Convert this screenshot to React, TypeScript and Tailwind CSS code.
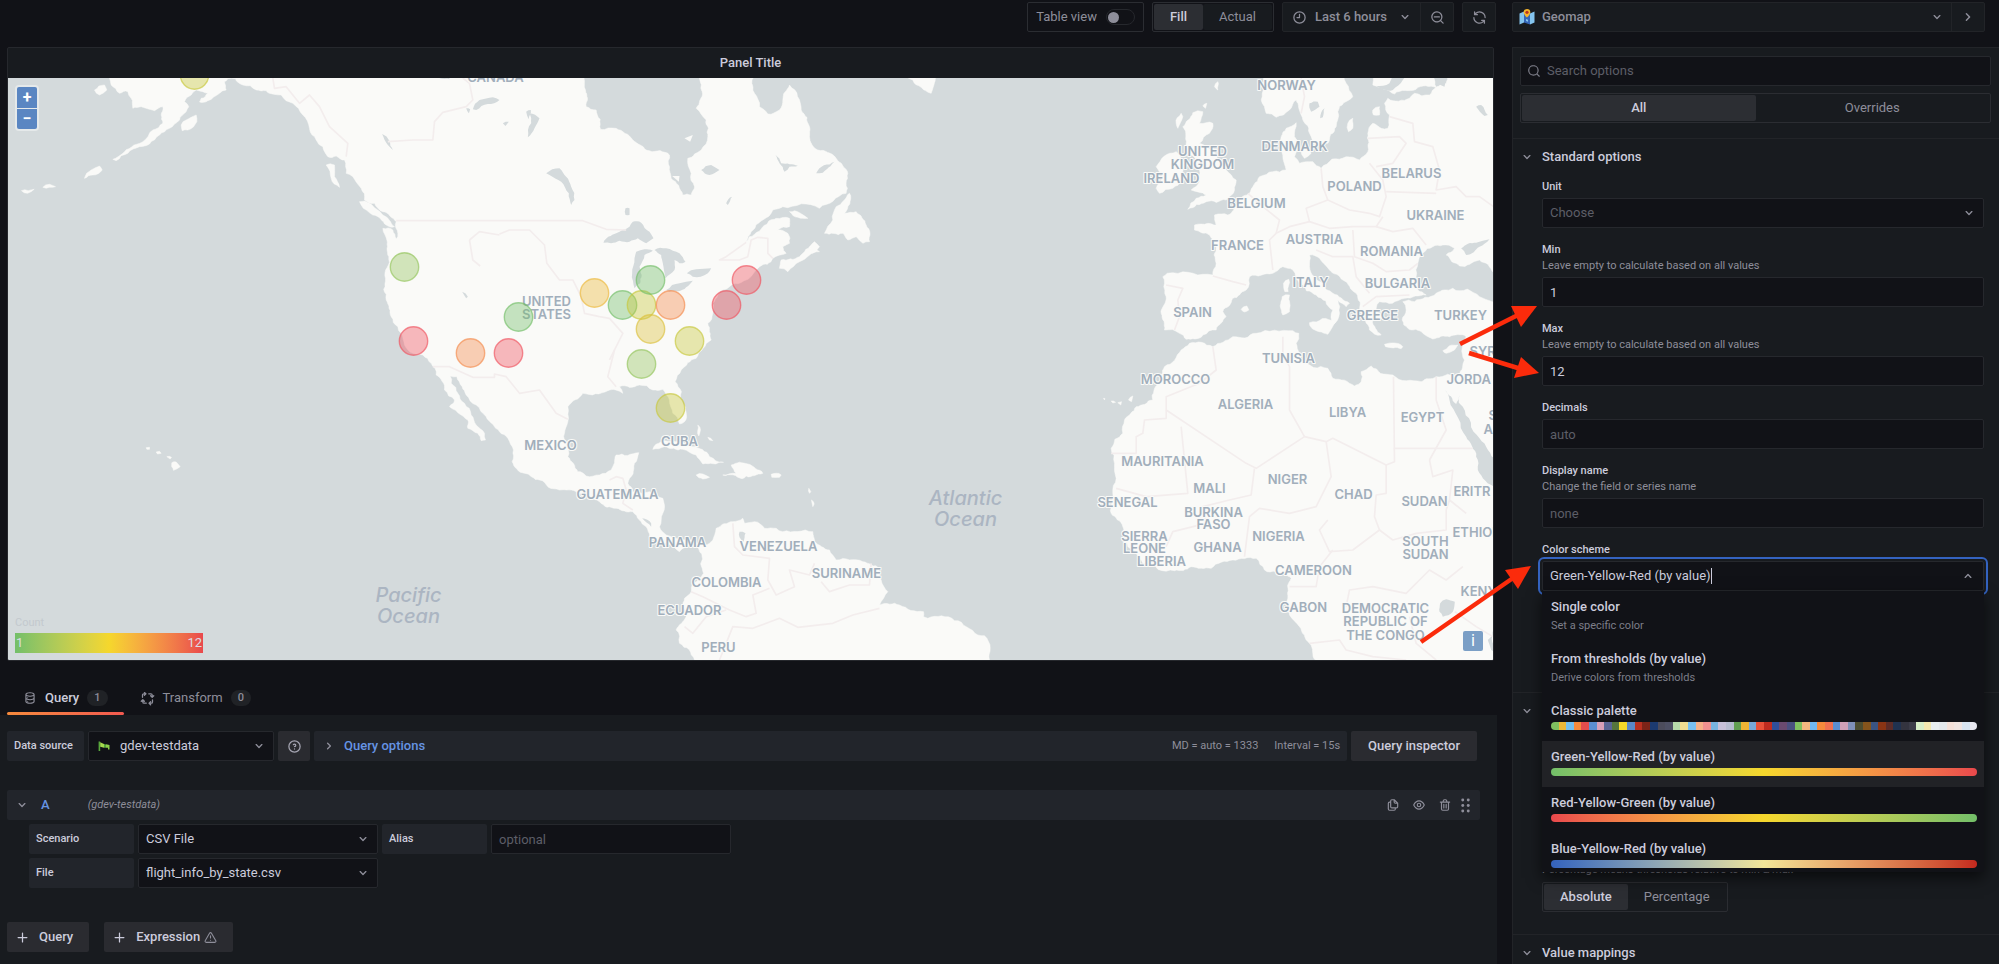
import { useId, type ReactNode } from "react";

/* ---------- icons ---------- */

const ICONS = {
  down: "M17,9.17a1,1,0,0,0-1.41,0L12,12.71,8.46,9.17a1,1,0,0,0-1.41,0,1,1,0,0,0,0,1.42l4.24,4.24a1,1,0,0,0,1.42,0L17,10.59A1,1,0,0,0,17,9.17Z",
  up: "M17,13.41,12.71,9.17a1,1,0,0,0-1.42,0L7.05,13.41a1,1,0,0,0,0,1.42,1,1,0,0,0,1.41,0L12,11.29l3.54,3.54a1,1,0,0,0,.7.29,1,1,0,0,0,.71-.29A1,1,0,0,0,17,13.41Z",
  right: "M14.83,11.29,10.59,7.05a1,1,0,0,0-1.42,0,1,1,0,0,0,0,1.41L12.71,12,9.17,15.54a1,1,0,0,0,0,1.41,1,1,0,0,0,.71.29,1,1,0,0,0,.71-.29l4.24-4.24A1,1,0,0,0,14.83,11.29Z",
  clock: "M12,2A10,10,0,1,0,22,12,10,10,0,0,0,12,2Zm0,18a8,8,0,1,1,8-8A8,8,0,0,1,12,20ZM12,6a1,1,0,0,0-1,1v4H8a1,1,0,0,0,0,2h4a1,1,0,0,0,1-1V7A1,1,0,0,0,12,6Z",
  search: "M21.71,20.29,18,16.61A9,9,0,1,0,16.61,18l3.68,3.68a1,1,0,0,0,1.42,0A1,1,0,0,0,21.71,20.29ZM11,18a7,7,0,1,1,7-7A7,7,0,0,1,11,18Z",
  zoomOut: "M21.71,20.29,18,16.61A9,9,0,1,0,16.61,18l3.68,3.68a1,1,0,0,0,1.42,0A1,1,0,0,0,21.71,20.29ZM11,18a7,7,0,1,1,7-7A7,7,0,0,1,11,18ZM15,10H7a1,1,0,0,0,0,2h8a1,1,0,0,0,0-2Z",
  sync: "M19.91,15.51H15.38a1,1,0,0,0,0,2h2.4A8,8,0,0,1,4,12a1,1,0,1,0-2,0,10,10,0,0,0,16.88,7.23V21a1,1,0,0,0,2,0V16.5A1,1,0,0,0,19.91,15.51ZM12,2A10,10,0,0,0,5.12,4.77V3a1,1,0,0,0-2,0V7.5a1,1,0,0,0,1,1h4.5a1,1,0,0,0,0-2H6.22A8,8,0,0,1,20,12a1,1,0,0,0,2,0A10,10,0,0,0,12,2Z",
  plus: "M19,11H13V5a1,1,0,0,0-2,0v6H5a1,1,0,0,0,0,2h6v6a1,1,0,0,0,2,0V13h6a1,1,0,0,0,0-2Z",
  database: "M8,16.5a1,1,0,1,0,1,1A1,1,0,0,0,8,16.5ZM8,10.5a1,1,0,1,0,1,1A1,1,0,0,0,8,10.5ZM12,2C8,2,4,3.37,4,6V18c0,2.63,4,4,8,4s8-1.37,8-4V6C20,3.37,16,2,12,2Zm6,16c0,.71-2.28,2-6,2s-6-1.29-6-2V14.73A13.16,13.16,0,0,0,12,16a13.16,13.16,0,0,0,6-1.27Zm0-6c0,.71-2.28,2-6,2s-6-1.29-6-2V8.73A13.16,13.16,0,0,0,12,10a13.16,13.16,0,0,0,6-1.27ZM12,8C8.28,8,6,6.71,6,6s2.28-2,6-2,6,1.29,6,2S15.72,8,12,8Z",
  question: "M11.29,15.29a1.58,1.58,0,0,0-.12.15.76.76,0,0,0-.09.18.64.64,0,0,0-.06.18,1.36,1.36,0,0,0,0,.2.84.84,0,0,0,.08.38.9.9,0,0,0,.54.54.94.94,0,0,0,.76,0,.9.9,0,0,0,.54-.54A1,1,0,0,0,13,16a1,1,0,0,0-.29-.71A1,1,0,0,0,11.29,15.29ZM12,2A10,10,0,1,0,22,12,10,10,0,0,0,12,2Zm0,18a8,8,0,1,1,8-8A8,8,0,0,1,12,20ZM12,7A3,3,0,0,0,9.4,8.5a1,1,0,1,0,1.73,1A1,1,0,0,1,12,9a1,1,0,0,1,0,2,1,1,0,1,0,0,2,3,3,0,0,0,0-6Z",
  eye: "M21.92,11.6C19.9,6.91,16.1,4,12,4S4.1,6.91,2.08,11.6a1,1,0,0,0,0,.8C4.1,17.09,7.9,20,12,20s7.9-2.91,9.92-7.6A1,1,0,0,0,21.92,11.6ZM12,18c-3.17,0-6.17-2.29-7.9-6C5.83,8.29,8.83,6,12,6s6.17,2.29,7.9,6C18.17,15.71,15.17,18,12,18ZM12,8a4,4,0,1,0,4,4A4,4,0,0,0,12,8Zm0,6a2,2,0,1,1,2-2A2,2,0,0,1,12,14Z",
  trash: "M10,18a1,1,0,0,0,1-1V11a1,1,0,0,0-2,0v6A1,1,0,0,0,10,18ZM20,6H16V5a3,3,0,0,0-3-3H11A3,3,0,0,0,8,5V6H4A1,1,0,0,0,4,8H5V19a3,3,0,0,0,3,3h8a3,3,0,0,0,3-3V8h1a1,1,0,0,0,0-2ZM10,5a1,1,0,0,1,1-1h2a1,1,0,0,1,1,1V6H10Zm7,14a1,1,0,0,1-1,1H8a1,1,0,0,1-1-1V8H17Zm-3-1a1,1,0,0,0,1-1V11a1,1,0,0,0-2,0v6A1,1,0,0,0,14,18Z",
  copy: "M21,8.94a1.31,1.31,0,0,0-.06-.27l0-.09a1.07,1.07,0,0,0-.19-.28h0l-6-6h0a1.07,1.07,0,0,0-.28-.19.32.32,0,0,0-.09,0A.88.88,0,0,0,14.05,2H10A3,3,0,0,0,7,5V6H6A3,3,0,0,0,3,9V19a3,3,0,0,0,3,3h8a3,3,0,0,0,3-3V18h1a3,3,0,0,0,3-3V9S21,9,21,8.94ZM15,5.41,17.59,8H16a1,1,0,0,1-1-1ZM15,19a1,1,0,0,1-1,1H6a1,1,0,0,1-1-1V9A1,1,0,0,1,6,8H7v7a3,3,0,0,0,3,3h5Zm4-4a1,1,0,0,1-1,1H10a1,1,0,0,1-1-1V5a1,1,0,0,1,1-1h3V7a3,3,0,0,0,3,3h3Z",
  warning: "M12,16a1,1,0,1,0,1,1A1,1,0,0,0,12,16Zm10.67,1.47-8.05-14a3,3,0,0,0-5.24,0l-8,14A3,3,0,0,0,3.94,22H20.06a3,3,0,0,0,2.61-4.53Zm-1.73,2a1,1,0,0,1-.88.51H3.94a1,1,0,0,1-.88-.51,1,1,0,0,1,0-1l8-14a1,1,0,0,1,1.78,0l8.05,14A1,1,0,0,1,20.94,19.49ZM12,8a1,1,0,0,0-1,1v4a1,1,0,0,0,2,0V9A1,1,0,0,0,12,8Z",
};

function Icon({ name, className = "size-[15px]" }: { name: keyof typeof ICONS; className?: string }) {
  return (
    <svg viewBox="0 0 24 24" fill="currentColor" aria-hidden="true" className={`shrink-0 ${className}`}>
      <path d={ICONS[name]} />
    </svg>
  );
}

function TransformIcon() {
  return (
    <svg viewBox="0 0 24 24" fill="none" stroke="currentColor" strokeWidth="2" strokeLinecap="round" strokeLinejoin="round" aria-hidden="true" className="size-[15px] shrink-0">
      <path d="M4 10V6.500a2 2 0 0 1 2-2h3M7 2.500l2.500 2L7 7M14 4.500h3.500a2 2 0 0 1 2 2v3M17 7.500l2.500 2.500L22 7.500M20 14v3.500a2 2 0 0 1-2 2h-3M17 17l-2.500 2.500L17 22M10 19.500H6.500a2 2 0 0 1-2-2v-3M2 16.500l2.500-2.500L7 16.500" />
    </svg>
  );
}

function DragIcon() {
  return (
    <svg viewBox="0 0 12 16" fill="currentColor" aria-hidden="true" className="h-[15px] w-[11px] shrink-0">
      {[2, 8, 14].map((y) => (
        <g key={y}>
          <circle cx="3" cy={y} r="1.6" />
          <circle cx="9" cy={y} r="1.6" />
        </g>
      ))}
    </svg>
  );
}

function GeomapIcon() {
  return (
    <svg viewBox="0 0 16 16" aria-hidden="true" className="size-4 shrink-0">
      <path d="M0.500 4.500 5 2.500v11L0.500 15.500z" fill="#84c4ee" />
      <path d="M5 2.500l6 2v11l-6-2z" fill="#3566b8" />
      <path d="M11 4.500l4.500-2v11L11 15.500z" fill="#84c4ee" />
      <path d="M7 10l2 .8v2L7 12z" fill="#84c4ee" />
      <path d="M8 0a3.300 3.300 0 0 1 3.300 3.300C11.300 5.800 8 8.500 8 8.500S4.700 5.800 4.700 3.300A3.300 3.300 0 0 1 8 0z" fill="#f5b52c" />
      <circle cx="8" cy="3.300" r="1.600" fill="#b93424" />
    </svg>
  );
}

function TestDataIcon() {
  return (
    <svg viewBox="0 0 12 12" aria-hidden="true" className="size-3 shrink-0">
      <path d="M1.400 1.500v9.500" stroke="#58a83c" strokeWidth="1.600" />
      <path d="M2.200 2.300 6 4v3.800L2.200 6.800z" fill="#a5dc4e" />
      <path d="M6 4l2 .6v3.200H6z" fill="#58a83c" />
      <path d="M8 4.200l3.500.8v4.600H10V7.800H8z" fill="#8ccf4a" />
    </svg>
  );
}

/* ---------- map ---------- */

type Point = [number, number];

function parse(points: string): Point[] {
  return points
    .trim()
    .split(/\s+/)
    .map((p) => p.split(",").map(Number) as Point);
}

/** Splits long edges and nudges the new points so that coasts look natural. */
function coast(points: string, amount = 0.14): string {
  let seed = 11;
  const random = () => {
    seed = (seed * 16807) % 2147483647;
    return seed / 2147483647 - 0.5;
  };
  let ring = parse(points);
  for (let pass = 0; pass < 3; pass++) {
    ring = ring.flatMap((a, i) => {
      const b = ring[(i + 1) % ring.length];
      const dx = b[0] - a[0];
      const dy = b[1] - a[1];
      const length = Math.hypot(dx, dy);
      if (length < 12 || length > 190) return [a];
      const k = random() * amount * 2;
      return [a, [(a[0] + b[0]) / 2 - dy * k, (a[1] + b[1]) / 2 + dx * k] as Point];
    });
  }
  return ring.map(([x, y]) => `${x.toFixed(1)},${y.toFixed(1)}`).join(" ");
}

const LAND = [
  // North, Central and South America
  "330,200 330,234 335,255 360,280 385,275 395,295 400,325 425,320 440,325 465,332 490,320 485,345 490,370 460,390 430,425 395,442 370,460 340,478 350,482 385,460 420,440 450,432 480,405 510,385 540,360 560,335 568,320 555,305 575,285 590,270 610,275 625,280 605,295 600,306 625,302 660,280 680,270 675,245 685,236 708,236 730,255 770,270 800,272 845,285 880,310 910,345 930,385 950,420 970,440 985,470 1010,468 1035,480 1040,520 1060,530 1085,565 1095,600 1125,610 1150,635 1190,665 1195,700 1190,717 1180,690 1150,685 1162,720 1168,770 1158,835 1160,900 1175,950 1195,980 1205,1000 1215,1035 1240,1060 1270,1065 1295,1090 1310,1125 1335,1170 1365,1200 1350,1220 1385,1245 1405,1260 1405,1285 1435,1300 1445,1322 1458,1320 1455,1300 1430,1275 1415,1245 1395,1210 1375,1180 1355,1150 1352,1128 1372,1130 1388,1160 1400,1185 1430,1215 1460,1250 1500,1295 1525,1315 1542,1350 1538,1385 1575,1420 1620,1440 1680,1470 1735,1480 1800,1505 1850,1525 1900,1535 1920,1560 1940,1580 1950,1610 1980,1622 2020,1640 2040,1655 2060,1640 2095,1635 2107,1662 2112,1720 2080,1750 2075,1775 2055,1795 2060,1850 2030,1890 2040,1930 2085,1980 2110,2040 2960,2040 2970,1980 2972,1945 2955,1907 2935,1905 2865,1862 2785,1855 2772,1850 2772,1835 2700,1815 2640,1815 2665,1775 2645,1740 2640,1705 2590,1685 2510,1680 2490,1650 2445,1625 2440,1595 2350,1595 2330,1585 2295,1585 2265,1565 2235,1570 2230,1555 2200,1565 2150,1585 2140,1620 2115,1635 2060,1620 2000,1605 1980,1580 1990,1540 1990,1495 1950,1475 1900,1475 1885,1450 1905,1390 1918,1358 1850,1365 1835,1410 1800,1425 1760,1428 1735,1415 1705,1370 1695,1300 1705,1265 1705,1220 1750,1180 1825,1172 1870,1180 1860,1160 1920,1155 1960,1170 1990,1168 2010,1200 2020,1240 2040,1272 2055,1265 2050,1210 2027,1145 2045,1110 2090,1075 2135,1020 2125,970 2140,940 2140,910 2155,885 2190,860 2240,840 2280,800 2320,775 2360,760 2350,740 2370,730 2365,700 2335,690 2370,680 2370,655 2330,655 2290,680 2240,725 2255,695 2290,660 2320,630 2350,620 2460,625 2540,580 2545,520 2510,475 2455,450 2430,410 2430,380 2405,330 2370,255 2350,300 2340,330 2305,342 2280,320 2265,280 2268,200 2100,200 2100,234 2108,275 2090,325 2120,360 2125,410 2105,450 2065,475 2075,520 2085,560 2075,585 2050,585 2015,535 2010,465 1950,452 1900,420 1850,385 1803,388 1790,330 1760,320 1758,270 1768,200",
  // Newfoundland, Nova Scotia, Anticosti, Greenland tip
  "2550,580 2535,640 2570,635 2600,675 2610,725 2590,730 2570,710 2545,720 2530,700 2475,700 2500,660 2510,620",
  "2340,805 2365,815 2400,785 2460,755 2445,735 2400,770 2345,780",
  "2370,635 2400,638 2425,655 2395,652",
  "2430,750 2445,725 2460,740 2440,760",
  "2700,230 2810,230 2795,280 2765,262 2740,240",
  // Pacific islands
  "1080,605 1110,610 1150,645 1185,680 1160,675 1120,645 1085,615",
  "980,495 1005,495 1005,530 1020,562 995,535",
  "285,270 315,255 322,270 300,285",
  "545,375 560,360 590,345 592,365 565,390 548,392",
  "255,535 275,510 300,498 308,510 280,525",
  "66,572 86,572 104,568 84,580",
  "130,562 150,553 168,560 150,562",
  "517,1388 530,1386 542,1400 522,1411",
  "470,1356 480,1354 485,1360 474,1362",
  "502,1370 516,1372 512,1377",
  "440,1343 450,1342 450,1348 442,1348",
  // Caribbean
  "1960,1348 1985,1325 2030,1325 2080,1340 2130,1370 2172,1387 2110,1392 2090,1365 2050,1348 1995,1340",
  "2195,1395 2245,1392 2290,1420 2240,1428 2228,1436 2170,1425 2210,1420",
  "2090,1425 2110,1422 2130,1432 2110,1437",
  "2315,1423 2345,1425 2340,1432 2317,1432",
  "2095,1275 2103,1290 2098,1308",
  "2125,1312 2140,1322 2130,1320",
  "2428,1465 2434,1475 2430,1480",
  "2436,1500 2444,1512 2440,1520",
  // Great Britain, Ireland
  "3580,338 3610,335 3600,370 3640,370 3630,400 3600,430 3640,450 3680,510 3710,540 3705,570 3680,600 3620,605 3565,628 3590,595 3620,585 3575,570 3600,545 3600,510 3590,480 3560,440 3550,380",
  "3470,500 3530,455 3550,480 3545,540 3520,565 3480,580 3470,565 3490,530",
  "3530,370 3545,340 3550,350 3535,385",
  "3645,260 3655,245 3655,270",
  "3610,318 3622,310 3618,325",
  // Scandinavia, Finland and Baltic islands
  "3780,200 3790,260 3785,300 3800,340 3830,352 3870,330 3890,300 3905,345 3930,400 3945,435 3985,430 4010,380 4015,335 4060,290 4040,250 4020,200",
  "4110,200 4120,255 4185,282 4250,268 4310,262 4280,200",
  "4045,370 4060,355 4060,385 4047,395",
  "4120,330 4140,320 4140,345 4122,345",
  "3905,450 3920,440 3935,460 3915,475",
  // Continental Europe
  "3490,830 3520,818 3640,825 3650,790 3650,740 3630,705 3585,690 3585,675 3625,670 3650,675 3645,645 3685,645 3720,600 3750,580 3780,530 3820,515 3860,510 3850,465 3845,410 3860,385 3890,368 3885,410 3900,430 3885,470 3900,490 3940,485 3965,505 4040,470 4080,480 4105,455 4105,400 4120,370 4145,385 4165,385 4170,345 4155,310 4165,295 4230,295 4245,280 4290,285 4340,250 4340,200 4600,200 4600,830 4482,818 4440,780 4380,798 4340,765 4365,745 4330,735 4300,740 4255,790 4250,830 4255,870 4280,885 4215,895 4140,905 4130,925 4150,950 4120,960 4145,1005 4110,990 4080,935 4070,880 4030,840 3990,810 3960,775 3930,765 3930,800 3970,850 4000,880 4050,910 4040,920 4015,900 4020,940 4000,975 4000,930 3950,885 3900,850 3880,810 3850,800 3820,820 3750,830 3740,870 3700,895 3670,935 3680,950 3650,990 3610,1005 3560,1018 3540,1000 3495,990 3485,940 3500,890 3495,850",
  "3848,890 3870,885 3870,935 3850,945",
  "3852,850 3868,838 3866,875 3856,875",
  "3930,968 4008,965 3985,1003 3935,982",
  "4155,1033 4210,1040 4205,1046 4158,1040",
  "4330,1052 4375,1035 4365,1050 4340,1060",
  "3725,928 3742,918 3748,930 3735,936",
  // Turkey, the Levant and Africa
  "4210,905 4245,905 4310,880 4360,865 4440,890 4600,890 4600,2040 3965,2040 3948,1980 3930,1930 3900,1880 3870,1845 3865,1795 3875,1735 3830,1715 3795,1710 3770,1675 3700,1680 3635,1705 3575,1700 3525,1712 3430,1690 3385,1640 3370,1580 3335,1540 3340,1480 3350,1435 3345,1390 3335,1345 3370,1300 3375,1260 3410,1220 3460,1200 3480,1150 3495,1100 3545,1050 3570,1030 3640,1040 3700,1010 3770,1000 3880,992 3898,1000 3890,1030 3900,1060 3905,1080 3985,1105 4000,1135 4065,1158 4085,1145 4085,1115 4115,1098 4180,1125 4265,1145 4310,1130 4380,1125 4395,1080 4400,1010 4350,1010 4300,1017 4270,1000 4225,985 4208,960 4220,930",
  "3355,1208 3366,1205 3364,1215",
  "3387,1200 3400,1188 3396,1205",
  "3335,1203 3348,1207 3340,1209",
  "3312,1195 3316,1195 3315,1200",
];

const WATER = [
  // Great Lakes
  "1812,728 1850,700 1890,680 1900,665 1925,668 1950,695 1962,715 1940,730 1915,715 1890,725 1860,722 1835,730",
  "1910,755 1960,752 1935,765 1920,800 1922,850 1905,865 1898,820 1905,775",
  "1965,750 2000,745 2040,760 2058,785 2040,790 2025,780 2025,810 1998,835 1990,790 1985,765",
  "2000,870 2040,850 2080,842 2060,862 2010,875",
  "2062,820 2090,808 2135,805 2125,820 2080,830",
  // Lakes of Canada
  "1640,520 1680,505 1700,530 1715,560 1725,600 1715,615 1708,580 1685,545 1650,525",
  "1878,625 1890,625 1890,645 1878,645",
  "1420,328 1440,300 1480,292 1500,300 1465,312 1430,330",
  "1590,340 1620,355 1605,385 1585,412 1595,370",
  "1580,335 1594,330 1588,358",
  "2105,510 2135,495 2160,510 2130,525",
  "2328,465 2345,490 2395,497 2370,500 2355,515 2340,490",
  "2450,520 2505,485 2470,518",
  "2180,610 2198,590 2185,615",
  "1510,370 1528,365 1518,378",
  "1388,875 1405,890 1400,895",
  "1148,402 1180,450 1165,435",
  "1320,235 1350,230 1350,238",
  "1400,325 1412,328 1408,340",
  // Maracaibo, Nicaragua
  "2220,1595 2238,1600 2232,1625 2220,1612",
  "1928,1555 1955,1570 1955,1580",
  // Red Sea, Lake Victoria
  "4335,1170 4350,1200 4400,1310 4430,1370 4435,1410 4490,1465 4490,1385 4440,1315 4390,1220 4378,1208 4380,1185 4370,1212",
  "4322,1810 4340,1798 4366,1805 4360,1835 4330,1850 4320,1835",
  "4482,1890 4465,1920 4475,1950 4490,1960",
  // Sea of Azov, Swedish and Russian lakes
  "4385,745 4430,728 4470,718 4440,740 4400,765",
  "3930,310 3955,305 3960,320 3935,335",
  "3962,355 3975,325 3970,352",
  "4430,320 4445,315 4465,345 4455,348",
  "4305,235 4340,230 4335,260 4315,250",
  "4195,205 4230,205 4210,240 4180,270 4130,258 4170,250",
];

const ISLANDS_ON_WATER = ["2055,415 2080,405 2072,425", "2018,528 2040,528 2038,545"];

const BORDERS = [
  "1190,662 1750,662 1820,688 1880,690",
  "1300,1100 1350,1100 1420,1132 1485,1132 1485,1122 1520,1130 1560,1180 1620,1170 1670,1240 1705,1258",
  "820,234 825,265 860,260 900,310 930,285 960,320 990,380 1045,430 1040,470",
  "1165,425 1240,420 1300,420 1305,365 1330,337 1400,320 1420,300 1410,250 1390,234",
  "2240,727 2180,770 2160,780 2220,780 2245,770 2255,720 2275,712 2305,715 2305,760 2320,775",
  "1500,702 1530,690 1590,690 1635,735 1642,790 1680,840 1720,840 1745,890 1755,940 1800,950 1830,955 1870,1000 1830,1080",
  "1845,1050 1825,1130 1850,1160",
  "1410,720 1440,695 1500,705",
  "1410,720 1420,780 1442,798",
  "1830,1440 1850,1430 1870,1435 1880,1470 1870,1510 1900,1530",
  "2200,1570 2205,1640 2230,1665 2310,1675 2305,1740 2330,1785 2385,1760 2370,1710 2430,1725 2445,1690",
  "2465,1745 2490,1775 2550,1755 2610,1755 2615,1690",
  "2075,1775 2110,1790 2190,1830 2240,1850 2270,1840 2260,1785 2310,1765",
  "2055,1880 2080,1900 2120,1850 2180,1830",
  "2160,1980 2200,1880 2260,1885 2340,1855 2395,1882 2500,1870 2560,1845 2640,1825",
  "3500,855 3550,865 3535,900 3540,950 3525,990",
  "3640,828 3700,845 3740,855",
  "3745,580 3790,620 3840,660 3830,700 3810,720 3820,810",
  "3965,505 3970,560 3985,600 4050,630 4110,640 4140,650 4160,590 4150,540 4110,490",
  "3830,700 3870,680 3930,665 3920,625 3985,600",
  "3930,665 3990,685 4060,680 4130,680 4150,650",
  "4105,415 4200,410 4220,430 4180,490 4130,500",
  "4170,350 4240,370 4245,425 4300,440 4320,510 4310,570 4370,560 4400,590 4440,590 4482,620",
  "4160,575 4310,580",
  "4060,690 4065,770 4120,790 4160,815 4230,810 4255,790",
  "4130,680 4180,695 4240,685 4280,735",
  "3950,750 4000,770 4060,770 4070,830 4110,880",
  "4090,920 4130,890 4230,885",
  "3905,340 3915,290 3905,234",
  "3640,1040 3650,1110 3600,1150 3500,1190 3500,1255 3435,1260 3430,1300 3410,1310 3410,1360 3335,1360",
  "3850,1010 3850,1060 3870,1100 3870,1230 3915,1310 3770,1405 3740,1390 3500,1230",
  "3545,1280 3565,1480 3440,1490 3350,1465",
  "3915,1310 3980,1325 4000,1315 4160,1395 4185,1385 4182,1130",
  "4182,1345 4420,1345",
  "3980,1325 3995,1430 3950,1520 3870,1540 3780,1525 3750,1550 3735,1670",
  "3765,1405 3755,1485 3690,1500 3610,1520 3620,1570 3520,1595 3500,1640",
  "4160,1395 4160,1480 4130,1485 4125,1550 4140,1590 4060,1650 3990,1655 3960,1590 3985,1560",
  "4140,1590 4180,1620 4250,1600 4340,1590 4340,1530 4350,1500",
  "4290,1380 4300,1430 4360,1410 4350,1500 4400,1540",
  "3870,1760 3950,1760 3960,1700 4000,1650",
  "4040,1820 4050,1770 4120,1760 4220,1780 4290,1710 4340,1740 4390,1700",
  "3930,1930 4020,1920 4040,1950 4120,1970 4220,1980",
  "4230,1850 4250,1930 4310,1980",
  "4366,1835 4430,1880 4480,1910",
  "4310,1130 4310,1200 4340,1290 4290,1380",
];

const MAP_LABELS: { text: string; x: number; y: number; start?: boolean }[] = [
  { text: "CANADA", x: 496, y: 82 },
  { text: "UNITED", x: 547, y: 306 },
  { text: "STATES", x: 547, y: 319 },
  { text: "MEXICO", x: 551, y: 450 },
  { text: "CUBA", x: 680, y: 446 },
  { text: "GUATEMALA", x: 618, y: 499 },
  { text: "PANAMA", x: 678, y: 547 },
  { text: "VENEZUELA", x: 779, y: 551 },
  { text: "COLOMBIA", x: 727, y: 587 },
  { text: "SURINAME", x: 847, y: 578 },
  { text: "ECUADOR", x: 690, y: 615 },
  { text: "PERU", x: 719, y: 652 },
  { text: "NORWAY", x: 1287, y: 90 },
  { text: "UNITED", x: 1203, y: 156 },
  { text: "KINGDOM", x: 1203, y: 169 },
  { text: "IRELAND", x: 1172, y: 183 },
  { text: "DENMARK", x: 1295, y: 151 },
  { text: "BELARUS", x: 1412, y: 178 },
  { text: "POLAND", x: 1355, y: 191 },
  { text: "BELGIUM", x: 1257, y: 208 },
  { text: "UKRAINE", x: 1436, y: 220 },
  { text: "AUSTRIA", x: 1315, y: 244 },
  { text: "FRANCE", x: 1238, y: 250 },
  { text: "ROMANIA", x: 1392, y: 256 },
  { text: "ITALY", x: 1311, y: 287 },
  { text: "BULGARIA", x: 1398, y: 288 },
  { text: "SPAIN", x: 1193, y: 317 },
  { text: "GREECE", x: 1373, y: 320 },
  { text: "TURKEY", x: 1461, y: 320 },
  { text: "TUNISIA", x: 1289, y: 363 },
  { text: "SYRIA", x: 1470, y: 356, start: true },
  { text: "MOROCCO", x: 1176, y: 384 },
  { text: "ALGERIA", x: 1246, y: 409 },
  { text: "LIBYA", x: 1348, y: 417 },
  { text: "EGYPT", x: 1423, y: 422 },
  { text: "JORDA", x: 1447, y: 384, start: true },
  { text: "SAUDI", x: 1489, y: 420, start: true },
  { text: "ARABIA", x: 1484, y: 434, start: true },
  { text: "MAURITANIA", x: 1163, y: 466 },
  { text: "MALI", x: 1210, y: 493 },
  { text: "NIGER", x: 1288, y: 484 },
  { text: "CHAD", x: 1354, y: 499 },
  { text: "SUDAN", x: 1425, y: 506 },
  { text: "ERITR", x: 1454, y: 496, start: true },
  { text: "SENEGAL", x: 1128, y: 507 },
  { text: "BURKINA", x: 1214, y: 517 },
  { text: "FASO", x: 1214, y: 529 },
  { text: "NIGERIA", x: 1279, y: 541 },
  { text: "SIERRA", x: 1145, y: 541 },
  { text: "LEONE", x: 1145, y: 553 },
  { text: "GHANA", x: 1218, y: 552 },
  { text: "LIBERIA", x: 1162, y: 566 },
  { text: "SOUTH", x: 1426, y: 546 },
  { text: "SUDAN", x: 1426, y: 559 },
  { text: "ETHIOPIA", x: 1453, y: 537, start: true },
  { text: "CAMEROON", x: 1314, y: 575 },
  { text: "KENYA", x: 1461, y: 596, start: true },
  { text: "GABON", x: 1304, y: 612 },
  { text: "DEMOCRATIC", x: 1386, y: 613 },
  { text: "REPUBLIC OF", x: 1386, y: 626 },
  { text: "THE CONGO", x: 1386, y: 640 },
];

const OCEAN_LABELS = [
  { text: "Atlantic", x: 966, y: 505 },
  { text: "Ocean", x: 966, y: 526 },
  { text: "Pacific", x: 409, y: 602 },
  { text: "Ocean", x: 409, y: 623 },
];

const GREEN = "#73bf69";
const LIME = "#a8c850";
const OLIVE = "#c8c83c";
const AMBER = "#ecb93a";
const ORANGE = "#f58a4c";
const RED = "#f0535f";

const MARKERS = [
  { x: 195, y: 75, color: OLIVE },
  { x: 405, y: 267, color: "#93c45c" },
  { x: 414, y: 341, color: RED },
  { x: 471, y: 353, color: ORANGE },
  { x: 509, y: 353, color: RED },
  { x: 519, y: 317, color: GREEN },
  { x: 595, y: 293, color: AMBER },
  { x: 623, y: 305, color: GREEN },
  { x: 642, y: 305, color: OLIVE },
  { x: 651, y: 280, color: GREEN },
  { x: 671, y: 305, color: ORANGE },
  { x: 651, y: 329, color: "#dcc03c" },
  { x: 690, y: 341, color: OLIVE },
  { x: 642, y: 364, color: "#93c45c" },
  { x: 671, y: 408, color: OLIVE },
  { x: 727, y: 305, color: RED },
  { x: 747, y: 280, color: RED },
];

function WorldMap() {
  return (
    <svg
      viewBox="8 78 1486 582"
      preserveAspectRatio="xMidYMid slice"
      role="img"
      aria-label="World map"
      className="absolute inset-0 size-full bg-[#d4dadc]"
    >
      <g transform="scale(0.33333)">
        <g fill="#fafaf8" stroke="#fafaf8" strokeWidth="1.5" strokeLinejoin="round">
          {LAND.map((points) => (
            <polygon key={points} points={coast(points)} />
          ))}
        </g>
        <g fill="#d4dadc">
          {WATER.map((points) => (
            <polygon key={points} points={coast(points, 0.12)} />
          ))}
        </g>
        <g fill="#fafaf8">
          {ISLANDS_ON_WATER.map((points) => (
            <polygon key={points} points={points} />
          ))}
        </g>
        <g fill="none" stroke="#f3eded" strokeWidth="5" strokeLinejoin="round">
          {BORDERS.map((points) => (
            <polyline key={points} points={points} />
          ))}
        </g>
      </g>
      <g
        fill="#a1aebb"
        stroke="#fafaf8"
        strokeWidth="2"
        strokeLinejoin="round"
        paintOrder="stroke"
        className="font-[Inter,'Noto_Sans',sans-serif] text-[13px] font-semibold"
      >
        {MAP_LABELS.map(({ text, x, y, start }) => (
          <text key={`${text}-${x}-${y}`} x={x} y={y} textAnchor={start ? "start" : "middle"}>
            {text}
          </text>
        ))}
      </g>
      <g fill="#abb5c2" className="font-[Inter,'Noto_Sans',sans-serif] text-[20px] font-medium italic">
        {OCEAN_LABELS.map(({ text, x, y }) => (
          <text key={`${text}-${x}`} x={x} y={y} textAnchor="middle">
            {text}
          </text>
        ))}
      </g>
      {MARKERS.map(({ x, y, color }) => (
        <circle key={`${x}-${y}`} cx={x} cy={y} r="14.2" fill={color} fillOpacity="0.4" stroke={color} strokeOpacity="0.65" strokeWidth="1.400" />
      ))}
    </svg>
  );
}

/* ---------- controls ---------- */

function SelectBox({
  value,
  label,
  id,
  className = "",
  muted = false,
  icon,
}: {
  value: string;
  label?: string;
  id?: string;
  className?: string;
  muted?: boolean;
  icon?: ReactNode;
}) {
  return (
    <div className={`flex h-[30px] items-center rounded-xs border border-[#26282d] bg-[#111217] ${className}`}>
      {icon && <span className="pl-[9px]">{icon}</span>}
      <div className="grid h-full flex-1 items-center">
        <select
          id={id}
          aria-label={label}
          className={`col-start-1 row-start-1 h-full w-full appearance-none bg-transparent outline-none ${icon ? "pl-[10px]" : "pl-[7px]"} pr-7 ${muted ? "text-[#5d5e67]" : "text-[#ccccdc]"}`}
        >
          <option>{value}</option>
        </select>
        <Icon name="down" className="pointer-events-none col-start-1 row-start-1 mr-[6px] size-4 justify-self-end text-[#8e8e9a]" />
      </div>
    </div>
  );
}

function InlineLabel({ htmlFor, children, className }: { htmlFor: string; children: ReactNode; className: string }) {
  return (
    <label htmlFor={htmlFor} className={`flex h-[30px] items-center rounded-xs bg-[#22252b] px-[7px] text-[11px] font-medium text-[#ccccdc] ${className}`}>
      {children}
    </label>
  );
}

function RadioGroup({
  name,
  label,
  options,
  className = "",
  optionClassName,
}: {
  name: string;
  label: string;
  options: string[];
  className?: string;
  optionClassName: string;
}) {
  return (
    <div role="radiogroup" aria-label={label} className={`flex h-[30px] rounded-xs border border-[#2b2d32] p-px ${className}`}>
      {options.map((option, i) => (
        <label
          key={option}
          className={`flex cursor-pointer items-center justify-center rounded-xs text-[#8e8e9a] has-checked:bg-[#2c2e33] has-checked:font-medium has-checked:text-[#ccccdc] ${optionClassName}`}
        >
          <input type="radio" name={name} defaultChecked={i === 0} className="sr-only" />
          {option}
        </label>
      ))}
    </div>
  );
}

function Field({
  label,
  description,
  children,
}: {
  label: string;
  description?: string;
  children: (id: string) => ReactNode;
}) {
  const id = useId();
  return (
    <div className="flex flex-col">
      <label htmlFor={id} className="text-[11px] leading-4 font-medium text-[#ccccdc]">
        {label}
      </label>
      {description && <p className="text-[11px] leading-4 text-[#8e8e9a]">{description}</p>}
      <div className="mt-[3px]">{children(id)}</div>
    </div>
  );
}

function TextInput({ id, value, placeholder }: { id: string; value?: string; placeholder?: string }) {
  return (
    <input
      id={id}
      type="text"
      defaultValue={value}
      placeholder={placeholder}
      className="block h-[30px] w-full rounded-xs border border-[#26282d] bg-[#111217] px-[7px] text-[#ccccdc] outline-none placeholder:text-[#5d5e67]"
    />
  );
}

/* ---------- main column ---------- */

function Toolbar() {
  return (
    <div className="flex h-8 items-end justify-end gap-2 pr-px">
      <label className="flex h-[30px] items-center gap-[9px] rounded-xs border border-[#2b2d32] px-2 text-[#8e8e9a]">
        Table view
        <input type="checkbox" role="switch" className="peer sr-only" />
        <span className="flex h-4 w-[29px] items-center rounded-full border border-[#26282d] bg-[#111217] px-px">
          <span className="size-[11px] rounded-full bg-[#8e8e9a]" />
        </span>
      </label>
      <RadioGroup name="scale" label="Panel size" options={["Fill", "Actual"]} className="bg-[#111217] [&>label:last-child]:bg-[#181b1f]" optionClassName="px-4" />
      <div className="flex h-[30px] rounded-xs border border-[#222428] bg-[#181b1f] text-[#8e8e9a]">
        <button type="button" className="flex items-center gap-2 pr-[7px] pl-[9px] font-medium">
          <Icon name="clock" />
          Last 6 hours
          <Icon name="down" className="ml-0.5 size-4" />
        </button>
        <button type="button" aria-label="Zoom out" className="flex w-[33px] items-center justify-center border-l border-[#222428]">
          <Icon name="zoomOut" />
        </button>
      </div>
      <button type="button" aria-label="Refresh" className="flex h-[30px] w-[34px] items-center justify-center rounded-xs border border-[#222428] bg-[#181b1f] text-[#8e8e9a]">
        <Icon name="sync" />
      </button>
    </div>
  );
}

function MapPanel() {
  return (
    <section className="mt-[15px] mr-[3px] ml-[7px] flex min-h-0 flex-1 flex-col overflow-hidden rounded-xs border border-[#26282d] bg-[#181b1f]">
      <h2 className="py-[5px] text-center leading-5 font-medium text-[#ccccdc]">Panel Title</h2>
      <div className="relative flex-1 overflow-hidden">
        <WorldMap />
        <div className="absolute top-[7px] left-[7px] flex flex-col gap-px rounded-sm bg-white/40 p-0.5">
          <button type="button" aria-label="Zoom in" className="flex h-[21px] w-5 items-center justify-center rounded-t-xs bg-[#5a86c2] text-base font-bold text-white">
            +
          </button>
          <button type="button" aria-label="Zoom out" className="flex h-5 w-5 items-center justify-center rounded-b-xs bg-[#5a86c2] text-base font-bold text-white">
            −
          </button>
        </div>
        <div className="absolute bottom-[7px] left-[7px]">
          <p className="text-[11px] leading-4 text-[#c3c9ce]">Count</p>
          <div className="mt-0.5 flex h-5 w-[188px] items-center justify-between bg-linear-to-r from-[#73bf69] via-[#f5d72c] to-[#e9484c] px-px text-[#dcdce4]">
            <span>1</span>
            <span>12</span>
          </div>
        </div>
        <button type="button" aria-label="Attributions" className="absolute right-[10px] bottom-[9px] flex size-5 items-center justify-center rounded-xs bg-[#7b9fc6] font-['DejaVu_Sans',sans-serif] text-base text-white">
          i
        </button>
      </div>
    </section>
  );
}

function Tab({ icon, label, count, active = false }: { icon: ReactNode; label: string; count: number; active?: boolean }) {
  return (
    <button type="button" role="tab" aria-selected={active} className={`relative flex items-center px-4 ${active ? "font-medium text-[#ccccdc]" : "text-[#8e8e9a]"}`}>
      <span className="text-[#8e8e9a]">{icon}</span>
      <span className="ml-2">{label}</span>
      <span className="ml-2 rounded-full bg-[#202226] px-[7px] text-[11px] leading-4 font-medium text-[#8e8e9a]">{count}</span>
      {active && <span className="absolute inset-x-0 bottom-0 h-[3px] rounded-xs bg-linear-to-r from-[#f58a3c] to-[#f2594f]" />}
    </button>
  );
}

function QueryPane() {
  return (
    <>
      <div role="tablist" className="mt-5 ml-[7px] flex h-[34px]">
        <Tab icon={<Icon name="database" className="size-[14px]" />} label="Query" count={1} active />
        <Tab icon={<TransformIcon />} label="Transform" count={0} />
      </div>
      <section className="flex h-[249px] flex-col bg-[#181b1f] pt-4 pr-[17px] pl-[7px]">
        <div className="mr-[3px] flex gap-1">
          <InlineLabel htmlFor="datasource" className="w-[77px]">
            Data source
          </InlineLabel>
          <SelectBox id="datasource" value="gdev-testdata" className="w-[186px]" icon={<TestDataIcon />} />
          <button type="button" aria-label="Data source help" className="flex h-[30px] w-8 items-center justify-center rounded-xs bg-[#2a2b30] text-[#a5a5b2]">
            <Icon name="question" />
          </button>
          <div className="flex h-[30px] flex-1 items-center rounded-xs bg-[#22252b] px-[7px]">
            <button type="button" className="flex items-center gap-[7px] font-medium text-[#6694e4]">
              <Icon name="right" className="size-4 text-[#8e8e9a]" />
              Query options
            </button>
            <span className="ml-auto text-[11px] text-[#8e8e9a]">MD = auto = 1333</span>
            <span className="ml-4 text-[11px] text-[#8e8e9a]">Interval = 15s</span>
          </div>
          <button type="button" className="h-[30px] rounded-xs bg-[#2a2b30] px-[17px] font-medium text-[#ccccdc]">
            Query inspector
          </button>
        </div>

        <div className="mt-[29px] flex h-[30px] items-center rounded-xs bg-[#22252b] pr-[9px] pl-[7px] text-[#8e8e9a]">
          <button type="button" aria-label="Collapse query A">
            <Icon name="down" className="block size-4" />
          </button>
          <span className="ml-[11px] font-medium text-[#6694e4]">A</span>
          <span className="ml-[38px] text-[11px] italic">(gdev-testdata)</span>
          <div className="ml-auto flex items-center">
            <button type="button" aria-label="Duplicate query">
              <Icon name="copy" className="size-[14px]" />
            </button>
            <button type="button" aria-label="Disable query" className="ml-3">
              <Icon name="eye" className="size-[14px]" />
            </button>
            <button type="button" aria-label="Remove query" className="ml-3">
              <Icon name="trash" className="size-[14px]" />
            </button>
            <button type="button" aria-label="Drag to reorder" className="ml-2">
              <DragIcon />
            </button>
          </div>
        </div>

        <div className="mt-1 ml-[22px] flex flex-col gap-1">
          <div className="flex gap-1">
            <InlineLabel htmlFor="scenario" className="w-[105px]">
              Scenario
            </InlineLabel>
            <SelectBox id="scenario" value="CSV File" className="w-[240px]" />
            <InlineLabel htmlFor="alias" className="w-[105px]">
              Alias
            </InlineLabel>
            <div className="w-[240px]">
              <TextInput id="alias" placeholder="optional" />
            </div>
          </div>
          <div className="flex gap-1">
            <InlineLabel htmlFor="file" className="w-[105px]">
              File
            </InlineLabel>
            <SelectBox id="file" value="flight_info_by_state.csv" className="w-[240px]" />
          </div>
        </div>

        <div className="mt-[34px] flex gap-[15px] font-medium text-[#ccccdc]">
          <button type="button" className="flex h-[30px] items-center gap-[9px] rounded-xs bg-[#2a2b30] pr-4 pl-2">
            <Icon name="plus" className="size-[15px]" />
            Query
          </button>
          <button type="button" className="flex h-[30px] items-center gap-[9px] rounded-xs bg-[#2a2b30] pr-4 pl-2">
            <Icon name="plus" className="size-[15px]" />
            <span className="flex items-center gap-1">
              Expression
              <Icon name="warning" className="size-[13px] text-[#8e8e9a]" />
            </span>
          </button>
        </div>
      </section>
    </>
  );
}

/* ---------- options sidebar ---------- */

const CLASSIC_PALETTE = [
  "#7fc060", "#eab839", "#72bff0", "#f58a3c", "#e24d4d", "#5b8ed0", "#d8a0b8", "#5a6696",
  "#56763c", "#f5d82a", "#5a88c8", "#b83020", "#7c2418", "#1c3a70", "#4c4c5c", "#4e5064",
  "#b7dbab", "#f0dc90", "#78c0f0", "#f5b088", "#f09090", "#78b4e0", "#c8c0d8", "#b8bcd0",
  "#629e51", "#f0b434", "#78a8d8", "#e85038", "#bf2c20", "#2f4f9c", "#6a4a70", "#4a5080",
  "#80c060", "#f4b880", "#70b8f0", "#f58a3c", "#f07050", "#5a8ed0", "#d0a0b8", "#8090b8",
  "#4c4c30", "#85541c", "#3a5484", "#8a3414", "#5c2c28", "#203250", "#34343f", "#3c3c48",
  "#d8eec8", "#f4e8b0", "#e8eef0", "#e4e8ec", "#f4e0d8", "#f0e4e0", "#d8e4f0", "#e8e8f0",
];

const SCHEMES: { name: string; description?: string; bar?: string; palette?: boolean; active?: boolean }[] = [
  { name: "Single color", description: "Set a specific color" },
  { name: "From thresholds (by value)", description: "Derive colors from thresholds" },
  { name: "Classic palette", palette: true },
  { name: "Green-Yellow-Red (by value)", bar: "from-[#73bf69] via-[#f5d72c] to-[#e9484c]", active: true },
  { name: "Red-Yellow-Green (by value)", bar: "from-[#e9484c] via-[#f5d72c] to-[#73bf69]" },
  { name: "Blue-Yellow-Red (by value)", bar: "from-[#3462bc] via-[#f2e698] to-[#c4281e]" },
];

function ColorSchemeSelect({ id }: { id: string }) {
  return (
    <div className="relative">
      <div className="flex h-[30px] items-center rounded-xs border border-[#26282d] bg-[#111217] px-[7px] outline-2 outline-offset-2 outline-[#3463c0]">
        <input
          id={id}
          type="text"
          role="combobox"
          aria-expanded="true"
          aria-controls="scheme-list"
          defaultValue="Green-Yellow-Red (by value)"
          className="field-sizing-content bg-transparent text-[#ccccdc] outline-none"
        />
        <span className="h-4 w-px bg-[#ccccdc]" />
        <Icon name="up" className="ml-auto size-4 text-[#8e8e9a]" />
      </div>
      <ul
        id="scheme-list"
        role="listbox"
        className="absolute inset-x-0 top-full z-10 h-[281px] overflow-hidden bg-[#111217] shadow-[0_6px_14px_rgba(0,0,0,0.6)]"
      >
        {SCHEMES.map(({ name, description, bar, palette, active }) => (
          <li
            key={name}
            role="option"
            aria-selected={!!active}
            className={`flex flex-col pt-[7px] pr-[7px] pl-[9px] ${description ? "h-[52px]" : "h-[46px]"} ${active ? "bg-[#212226]" : ""}`}
          >
            <span className="leading-[18px] font-medium text-[#ccccdc]">{name}</span>
            {description && <span className="mt-0.5 text-[11px] leading-4 text-[#7d7e89]">{description}</span>}
            {palette && (
              <span className="mt-0.5 flex h-2 overflow-hidden rounded-full">
                {CLASSIC_PALETTE.map((color, i) => (
                  <span key={i} className="flex-1" style={{ backgroundColor: color }} />
                ))}
              </span>
            )}
            {bar && <span className={`mt-0.5 h-2 rounded-full bg-linear-to-r ${bar}`} />}
          </li>
        ))}
      </ul>
    </div>
  );
}

function SectionHeader({ title, label }: { title?: string; label?: string }) {
  return (
    <button type="button" aria-label={label} className="flex h-9 w-full items-center gap-[7px] border-t border-[#222428] pl-[6px] font-medium text-[#ccccdc]">
      <Icon name="down" className="size-4 text-[#8e8e9a]" />
      <span>{title}</span>
    </button>
  );
}

function Arrows() {
  return (
    <svg viewBox="0 0 130 360" aria-hidden="true" className="pointer-events-none absolute top-[295px] -left-[97px] z-20 h-[360px] w-[130px]">
      <g stroke="#fb2b0b" strokeWidth="4.5" strokeLinecap="butt">
        <path d="M45 49 L103 20" />
        <path d="M54 58 L106 74" />
        <path d="M6 347 L98 283" />
      </g>
      <g fill="#fb2b0b">
        <path d="M96 11 L122 11 L106 32 Z" />
        <path d="M106 62 L124 78 L99 83 Z" />
        <path d="M90 275 L116 271 L103 294 Z" />
      </g>
    </svg>
  );
}

function Sidebar() {
  return (
    <aside className="relative flex w-[487px] shrink-0 flex-col">
      <div className="mt-0.5 mr-[14px] flex h-[30px] shrink-0 rounded-xs border border-[#222428] bg-[#181b1f] text-[#8e8e9a]">
        <button type="button" className="flex flex-1 items-center gap-[7px] px-[6px] font-medium">
          <GeomapIcon />
          Geomap
          <Icon name="down" className="ml-auto size-4" />
        </button>
        <button type="button" aria-label="Close options pane" className="flex w-[33px] items-center justify-center border-l border-[#222428]">
          <Icon name="right" className="size-[18px]" />
        </button>
      </div>

      <div className="mt-[15px] flex flex-1 flex-col border-t border-l border-[#222428] bg-[#181b1f]">
        <div className="mr-2 mt-2 mb-[15px] ml-[7px] flex flex-col gap-[7px]">
          <label className="flex h-[30px] items-center gap-[6px] rounded-xs border border-[#26282d] bg-[#111217] px-[6px] text-[#7d7e89]">
            <Icon name="search" className="size-[14px]" />
            <input type="search" aria-label="Search options" placeholder="Search options" className="flex-1 bg-transparent outline-none placeholder:text-[#5d5e67]" />
          </label>
          <RadioGroup name="scope" label="Option scope" options={["All", "Overrides"]} optionClassName="flex-1" />
        </div>

        <SectionHeader title="Standard options" />
        <div className="mt-[5px] mr-[15px] ml-[29px] flex flex-col gap-[14px]">
          <Field label="Unit">{(id) => <SelectBox id={id} value="Choose" muted />}</Field>
          <Field label="Min" description="Leave empty to calculate based on all values">
            {(id) => <TextInput id={id} value="1" />}
          </Field>
          <Field label="Max" description="Leave empty to calculate based on all values">
            {(id) => <TextInput id={id} value="12" />}
          </Field>
          <Field label="Decimals">{(id) => <TextInput id={id} placeholder="auto" />}</Field>
          <Field label="Display name" description="Change the field or series name">
            {(id) => <TextInput id={id} placeholder="none" />}
          </Field>
          <Field label="Color scheme">{(id) => <ColorSchemeSelect id={id} />}</Field>
        </div>

        <div className="mt-[101px]">
          <SectionHeader label="Thresholds" />
          <div className="mt-[134px] ml-[29px]">
            <p className="text-[11px] leading-4 text-[#8e8e9a]">Percentage means thresholds relative to min &amp; max</p>
            <RadioGroup name="threshold-mode" label="Thresholds mode" options={["Absolute", "Percentage"]} className="mt-1 w-fit" optionClassName="px-4" />
          </div>
        </div>

        <div className="mt-[22px]">
          <SectionHeader title="Value mappings" />
        </div>
      </div>
      <Arrows />
    </aside>
  );
}

export default function App() {
  return (
    <div className="flex h-screen overflow-hidden bg-[#111217] font-[Roboto,'Liberation_Sans',sans-serif] text-[13px]">
      <main className="mr-[15px] flex min-w-0 flex-1 flex-col">
        <Toolbar />
        <MapPanel />
        <QueryPane />
      </main>
      <Sidebar />
    </div>
  );
}
